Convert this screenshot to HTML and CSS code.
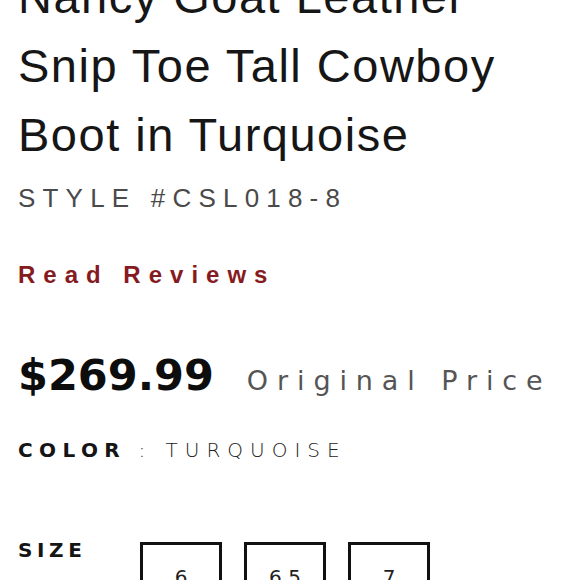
FILE: index.html
```html
<!DOCTYPE html>
<html lang="en">
<head>
  <meta charset="UTF-8">
  <meta name="viewport" content="width=device-width, initial-scale=1.0">
  <title>Nancy Goat Leather Snip Toe Tall Cowboy Boot in Turquoise</title>
  <link rel="stylesheet" href="styles.css">
</head>
<body>
  <section class="product">
    <h1 class="product-title">Nancy Goat Leather Snip Toe Tall Cowboy Boot in Turquoise</h1>
    <div class="style-no">STYLE #CSL018-8</div>
    <a class="reviews" href="#reviews">Read Reviews</a>
    <div class="price-row">
      <span class="price">$269.99</span>
      <span class="price-note">Original Price</span>
    </div>
    <div class="color-row">
      <span class="option-label">COLOR</span>
      <span class="color-value">: TURQUOISE</span>
    </div>
    <div class="size-row">
      <span class="option-label">SIZE</span>
      <div class="sizes">
        <button class="size">6</button>
        <button class="size">6.5</button>
        <button class="size">7</button>
      </div>
    </div>
  </section>
</body>
</html>
```

FILE: styles.css
```css
body {
  font-family: "Liberation Sans", Arial, sans-serif;
  margin: 0;
  padding: 0;
  background: #fff;
  color: #111;
  overflow: hidden;
}
.product {
  padding: 0 18px;
}
.product-title {
  margin: -38px 0 0;
  width: 510px;
  font-size: 47px;
  font-weight: normal;
  line-height: 69px;
  letter-spacing: 1.5px;
  color: #161616;
}
.style-no {
  margin-top: 14px;
  font-size: 26px;
  line-height: 30px;
  letter-spacing: 7.2px;
  color: #4a4a4a;
}
.reviews {
  display: block;
  margin-top: 48px;
  font-size: 24px;
  font-weight: bold;
  line-height: 28px;
  letter-spacing: 8px;
  color: #861b1f;
  text-decoration: none;
}
.price-row {
  display: flex;
  align-items: baseline;
  margin-top: 61px;
  font-family: "DejaVu Sans", sans-serif;
}
.price {
  font-size: 43px;
  font-weight: bold;
  line-height: 50px;
  color: #0d0d0d;
}
.price-note {
  margin-left: 33px;
  font-size: 27px;
  letter-spacing: 8.9px;
  color: #555;
}
.color-row {
  margin-top: 38px;
  font-family: "DejaVu Sans", sans-serif;
  font-size: 20px;
  line-height: 24px;
}
.option-label {
  font-weight: bold;
  letter-spacing: 6.4px;
  color: #151515;
}
.color-value {
  margin-left: 6px;
  font-weight: 200;
  letter-spacing: 7px;
  color: #222;
}
.size-row {
  display: flex;
  margin-top: 76px;
  font-family: "DejaVu Sans", sans-serif;
  font-size: 20px;
  line-height: 24px;
}
.size-row .option-label {
  width: 122px;
  letter-spacing: 4.6px;
}
.sizes {
  display: flex;
  gap: 22px;
  margin-top: 4px;
}
.size {
  width: 82px;
  height: 70px;
  border: 3px solid #111;
  background: #fff;
  font-family: "DejaVu Sans", sans-serif;
  font-size: 20px;
  color: #222;
  padding: 0;
}
```
